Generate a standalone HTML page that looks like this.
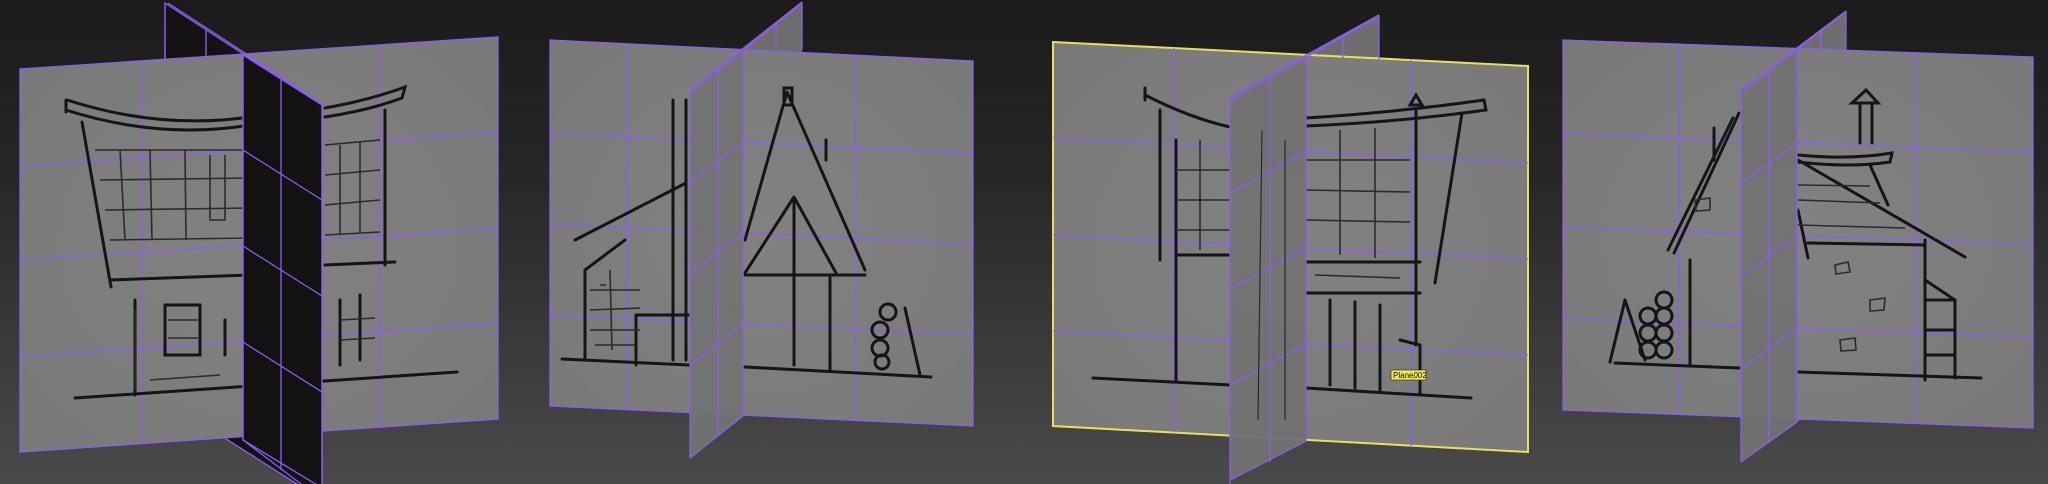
<!DOCTYPE html>
<html><head><meta charset="utf-8"><style>
html,body{margin:0;padding:0;width:2048px;height:484px;overflow:hidden;background:#2a2a2a}
svg{display:block}
</style></head><body>
<svg width="2048" height="484" viewBox="0 0 2048 484" xmlns="http://www.w3.org/2000/svg">
<defs>
<linearGradient id="bg" x1="0" y1="0" x2="0" y2="1">
<stop offset="0" stop-color="#1b1b1b"/><stop offset="0.35" stop-color="#262626"/><stop offset="1" stop-color="#4a4a4a"/>
</linearGradient>
<radialGradient id="pl" cx="0.5" cy="0.5" r="0.7">
<stop offset="0" stop-color="#828282"/><stop offset="1" stop-color="#797979"/>
</radialGradient>
</defs>
<rect width="2048" height="484" fill="url(#bg)"/>
<g stroke="#8d5df0" stroke-width="1.3" fill="none">

<!-- PANEL 1 -->
<polygon points="165,3 322,105 322,500 165,400" fill="#131313"/>
<polygon points="20,69 498,37 498,419 20,452" fill="url(#pl)"/>
<line x1="142" y1="61" x2="142" y2="444"/><line x1="379" y1="45" x2="379" y2="427"/>
<line x1="20" y1="166" x2="498" y2="132"/><line x1="20" y1="260" x2="498" y2="228"/><line x1="20" y1="357" x2="498" y2="323"/>
<g stroke="#151515" stroke-width="3" stroke-linecap="round">
<path d="M75,398 L457,372"/>
<path d="M67,100 Q160,130 250,117 M66,110 Q160,140 250,125 M66,100 L66,112"/>
<path d="M325,108 Q370,100 405,87 L402,98 Q370,110 325,117"/>
<path d="M82,122 L111,287 M385,110 L385,265 M110,280 L250,275 M325,265 L395,262"/>
<path d="M135,300 L135,395 M165,305 L200,305 L200,355 L165,355 Z M340,300 L340,365 M360,295 L360,360"/>
<path d="M225,320 L225,355"/>
</g>
<g stroke="#2b2b2b" stroke-width="1.6">
<path d="M95,150 L250,150 M100,180 L250,178 M105,210 L250,208 M110,240 L250,238 M325,145 L380,140 M325,175 L380,170 M325,205 L380,200 M325,235 L380,232"/>
<path d="M120,150 L125,240 M150,150 L152,240 M185,150 L186,240 M340,145 L340,235 M360,142 L360,233"/>
<path d="M210,155 L210,220 L225,220 L225,155 M168,320 L198,320 M168,338 L198,338"/>
<path d="M135,310 L135,390 M150,380 L220,375 M340,320 L375,318 M340,340 L375,338"/>
</g>
<polygon points="243,55 322,105 322,500 243,440" fill="#121212"/>
<line x1="165" y1="3" x2="322" y2="105"/><line x1="168" y1="3" x2="325" y2="105"/>
<line x1="165" y1="3" x2="165" y2="60"/><line x1="206" y1="30" x2="206" y2="57"/>
<line x1="243" y1="55" x2="243" y2="440"/><line x1="281" y1="80" x2="281" y2="470"/><line x1="322" y1="105" x2="322" y2="484"/>
<line x1="243" y1="150" x2="322" y2="200"/><line x1="243" y1="246" x2="322" y2="296"/><line x1="243" y1="342" x2="322" y2="392"/>
<line x1="243" y1="440" x2="322" y2="488"/>

<!-- PANEL 2 -->
<polygon points="802,2 743,50 743,416 802,380" fill="#6d6d6d" stroke="none"/>
<polygon points="550,40 973,61 973,426 550,406" fill="url(#pl)"/>
<line x1="627" y1="44" x2="627" y2="410"/><line x1="856" y1="55" x2="856" y2="420"/>
<line x1="550" y1="133" x2="973" y2="153"/><line x1="550" y1="224" x2="973" y2="244"/><line x1="550" y1="315" x2="973" y2="334"/>
<g stroke="#151515" stroke-width="3" stroke-linecap="round" fill="none">
<path d="M562,359 L689,365 M745,367 L931,377"/>
<path d="M787,92 L745,240 M787,92 L865,270 M794,197 L745,273 M794,197 L836,273 M794,197 L794,365 M745,275 L865,275"/>
<path d="M784,88 L792,88 L792,105 L784,105 Z M826,140 L826,160"/>
<path d="M673,100 L673,360 M686,100 L686,360 M575,240 L686,183 M585,270 L585,360 M585,270 L625,240"/>
<path d="M636,315 L636,365 M636,315 L690,315"/>
<path d="M830,275 L830,370"/>
<circle cx="888" cy="312" r="8"/><circle cx="880" cy="330" r="8"/><circle cx="880" cy="348" r="8"/><circle cx="882" cy="362" r="7"/>
<path d="M905,308 L920,375"/>
</g>
<g stroke="#2b2b2b" stroke-width="1.6"><path d="M590,290 L640,290 M590,310 L640,308 M590,330 L640,330 M595,345 L635,345 M610,270 L612,350 M600,285 L606,285"/></g>
<polygon points="802,2 690,90 690,458 743,416 743,50" fill="#737373" stroke="none" opacity="0.95"/>
<line x1="802" y1="2" x2="690" y2="90"/><line x1="800" y1="5" x2="690" y2="93"/>
<line x1="802" y1="2" x2="802" y2="50"/><line x1="776" y1="22" x2="776" y2="45"/>
<line x1="690" y1="90" x2="690" y2="458"/><line x1="718" y1="68" x2="718" y2="436"/><line x1="743" y1="50" x2="743" y2="416"/>
<line x1="690" y1="183" x2="743" y2="142"/><line x1="690" y1="274" x2="743" y2="232"/><line x1="690" y1="365" x2="743" y2="324"/><line x1="690" y1="458" x2="743" y2="416"/>

<!-- PANEL 3 -->
<polygon points="1379,15 1306,56 1306,441 1379,400" fill="#6d6d6d" stroke="none"/>
<polygon points="1053,42 1528,66 1528,452 1053,426" fill="url(#pl)" stroke="#e8e05a" stroke-width="2"/>
<line x1="1174" y1="48" x2="1174" y2="432"/><line x1="1411" y1="60" x2="1411" y2="446"/>
<line x1="1053" y1="138" x2="1528" y2="163"/><line x1="1053" y1="235" x2="1528" y2="259"/><line x1="1053" y1="331" x2="1528" y2="355"/>
<g stroke="#151515" stroke-width="3" stroke-linecap="round" fill="none">
<path d="M1145,95 Q1190,118 1230,127 M1145,88 L1145,100"/>
<path d="M1306,118 Q1400,112 1484,100 L1486,110 Q1400,122 1306,126"/>
<path d="M1176,140 L1176,380 M1160,110 L1160,260 M1462,113 L1435,283 M1176,255 L1230,255 M1306,262 L1420,262 M1306,293 L1420,293"/>
<path d="M1093,378 L1230,385 M1306,388 L1471,398"/>
<path d="M1416,110 L1416,345 M1410,105 L1416,95 L1422,105 Z"/>
<path d="M1330,300 L1330,385 M1355,302 L1355,388 M1380,305 L1380,390 M1400,340 L1420,345 L1420,395"/>
</g>
<g stroke="#2b2b2b" stroke-width="1.6"><path d="M1176,170 L1230,170 M1176,200 L1230,200 M1176,230 L1230,230 M1306,160 L1410,160 M1306,190 L1410,192 M1306,220 L1410,222 M1200,140 L1200,250 M1340,130 L1340,255 M1375,128 L1375,258 M1315,275 L1400,278"/></g>
<polygon points="1379,15 1230,97 1230,480 1306,441 1306,56" fill="#727272" stroke="none" opacity="0.95"/>
<line x1="1379" y1="15" x2="1230" y2="97"/><line x1="1376" y1="18" x2="1230" y2="100"/>
<line x1="1379" y1="15" x2="1379" y2="60"/><line x1="1343" y1="35" x2="1343" y2="58"/>
<line x1="1230" y1="97" x2="1230" y2="484"/><line x1="1270" y1="76" x2="1270" y2="462"/><line x1="1306" y1="56" x2="1306" y2="441"/>
<line x1="1230" y1="193" x2="1306" y2="152"/><line x1="1230" y1="289" x2="1306" y2="248"/><line x1="1230" y1="385" x2="1306" y2="344"/><line x1="1230" y1="480" x2="1306" y2="441"/>
<g stroke="#2a2a2a" stroke-width="1.2" fill="none"><path d="M1262,130 L1258,420 M1285,140 L1285,420"/></g>

<!-- PANEL 4 -->
<polygon points="1846,11 1797,49 1797,422 1846,390" fill="#6d6d6d" stroke="none"/>
<polygon points="1563,40 2033,57 2033,428 1563,410" fill="url(#pl)"/>
<line x1="1679" y1="44" x2="1679" y2="414"/><line x1="1916" y1="52" x2="1916" y2="424"/>
<line x1="1563" y1="133" x2="2033" y2="152"/><line x1="1563" y1="227" x2="2033" y2="244"/><line x1="1563" y1="318" x2="2033" y2="337"/>
<g stroke="#151515" stroke-width="3" stroke-linecap="round" fill="none">
<path d="M1798,155 Q1850,160 1892,153 L1890,162 Q1850,168 1798,162"/>
<path d="M1798,160 L1965,257 M1870,165 L1888,205 M1798,210 L1808,258"/>
<path d="M1925,240 L1925,380 M1925,280 L1955,300 L1955,378 M1925,300 L1955,300 M1925,330 L1955,330 M1925,355 L1955,355"/>
<path d="M1798,372 L1981,378 M1615,363 L1739,368"/>
<path d="M1860,103 L1860,143 M1872,103 L1872,143 M1852,103 L1866,90 L1878,103 Z"/>
<path d="M1739,113 L1674,253 M1733,118 L1668,250 M1714,128 L1714,160"/>
<path d="M1690,260 L1690,365 M1808,243 L1925,245"/>
<circle cx="1664" cy="300" r="8"/><circle cx="1648" cy="316" r="8"/><circle cx="1664" cy="316" r="8"/><circle cx="1648" cy="333" r="8"/><circle cx="1664" cy="333" r="8"/><circle cx="1648" cy="350" r="8"/><circle cx="1664" cy="350" r="8"/>
<path d="M1625,300 L1645,360 M1625,300 L1610,362"/>
</g>
<g stroke="#2b2b2b" stroke-width="1.6"><path d="M1798,185 L1870,186 M1798,200 L1880,203 M1798,225 L1905,228 M1835,265 L1848,262 L1850,272 L1836,274 Z M1870,300 L1885,298 L1884,310 L1870,311 Z M1840,340 L1855,338 L1856,350 L1841,351 Z M1695,200 L1710,198 L1710,210 L1696,211 Z"/></g>
<polygon points="1846,11 1741,90 1741,462 1797,422 1797,49" fill="#727272" stroke="none" opacity="0.95"/>
<line x1="1846" y1="11" x2="1741" y2="90"/><line x1="1843" y1="14" x2="1741" y2="93"/>
<line x1="1846" y1="11" x2="1846" y2="52"/><line x1="1821" y1="30" x2="1821" y2="50"/>
<line x1="1741" y1="90" x2="1741" y2="462"/><line x1="1769" y1="69" x2="1769" y2="441"/><line x1="1797" y1="49" x2="1797" y2="422"/>
<line x1="1741" y1="183" x2="1797" y2="143"/><line x1="1741" y1="276" x2="1797" y2="235"/><line x1="1741" y1="369" x2="1797" y2="328"/><line x1="1741" y1="462" x2="1797" y2="422"/>
</g>
<rect x="1391" y="370" width="35" height="10" fill="#f2ea4a" stroke="#222" stroke-width="0.6"/>
<text x="1393" y="378" font-family="Liberation Sans, sans-serif" font-size="8" fill="#111">Plane002</text>
</svg>
</body></html>
